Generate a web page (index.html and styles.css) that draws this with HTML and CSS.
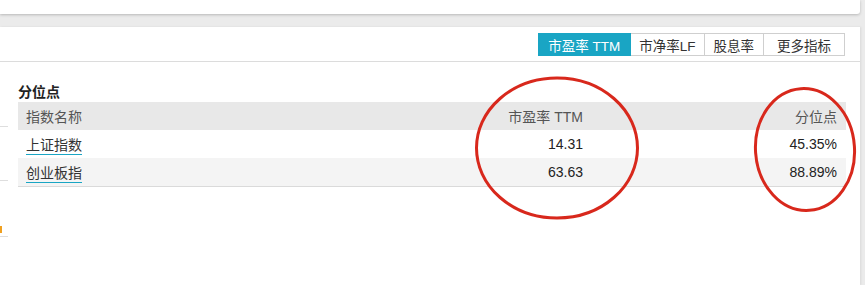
FILE: index.html
```html
<!DOCTYPE html>
<html lang="zh">
<head>
<meta charset="utf-8">
<title>分位点</title>
<link rel="stylesheet" href="styles.css">
</head>
<body>
<div class="top-card"></div>
<div class="panel">
  <div class="toolbar">
    <div class="tabs">
      <span class="tab active">市盈率 TTM</span>
      <span class="tab pb">市净率LF</span>
      <span class="tab">股息率</span>
      <span class="tab wide">更多指标</span>
    </div>
  </div>
  <div class="body">
    <div class="side">
      <div class="side-line l1"></div>
      <div class="side-line l2"></div>
      <div class="side-mark"></div>
      <div class="side-line l3"></div>
    </div>
    <div class="content">
      <h3 class="title">分位点</h3>
      <table class="grid">
        <colgroup>
          <col class="c1"><col class="c2"><col class="c3">
        </colgroup>
        <thead>
          <tr><th class="left">指数名称</th><th>市盈率 TTM</th><th>分位点</th></tr>
        </thead>
        <tbody>
          <tr><td class="left"><a class="idx">上证指数</a></td><td>14.31</td><td>45.35%</td></tr>
          <tr class="alt"><td class="left"><a class="idx">创业板指</a></td><td>63.63</td><td>88.89%</td></tr>
        </tbody>
      </table>
    </div>
  </div>
  <svg class="marks" width="865" height="258" viewBox="0 27 865 258" xmlns="http://www.w3.org/2000/svg">
    <ellipse cx="557" cy="148" rx="80.5" ry="70" fill="none" stroke="#d8281c" stroke-width="3"/>
    <ellipse cx="805" cy="149.5" rx="49.5" ry="61" transform="rotate(-4 805 149.5)" fill="none" stroke="#d8281c" stroke-width="3"/>
  </svg>
</div>
</body>
</html>
```
FILE: styles.css
```css
html, body {
  margin: 0;
  padding: 0;
}
body {
  width: 865px;
  height: 285px;
  overflow: hidden;
  background: #ebebeb;
  font-family: "Liberation Sans", "Noto Sans CJK SC", sans-serif;
  color: #333;
}
.top-card {
  width: 860px;
  height: 14px;
  background: #fff;
  border-radius: 0 0 3px 0;
  box-shadow: 0 1px 3px rgba(0, 0, 0, 0.22);
}
.panel {
  position: relative;
  margin-top: 13px;
  width: 860px;
  height: 258px;
  background: #fff;
  box-shadow: 1px 0 2px rgba(0, 0, 0, 0.08);
}
.toolbar {
  display: flex;
  justify-content: flex-end;
  padding: 6px 15px 0 0;
  box-sizing: border-box;
  height: 35px;
  border-bottom: 1px solid #dcdcdc;
}
.tabs {
  display: flex;
  height: 23px;
}
.tab {
  display: flex;
  align-items: center;
  justify-content: center;
  height: 23px;
  box-sizing: border-box;
  border: 1px solid #cfcfcf;
  border-left: none;
  padding: 0 9px;
  font-size: 13.5px;
  color: #333;
  background: #fff;
}
.tab.active {
  background: #19a5c4;
  border-color: #19a5c4;
  color: #fff;
  padding: 0 10px;
}
.tab.pb {
  padding: 0 8px;
}
.tab.wide {
  padding: 0 13px;
}
.body {
  display: flex;
}
.side {
  position: relative;
  width: 8px;
}
.side-line {
  position: absolute;
  left: 0;
  width: 8px;
  height: 1px;
  background: #dedede;
}
.l1 { top: 64px; }
.l2 { top: 118px; }
.l3 { top: 174px; }
.side-mark {
  position: absolute;
  left: 0;
  top: 164px;
  width: 2px;
  height: 7px;
  background: #f0a020;
}
.content {
  margin-left: 10px;
  width: 828px;
}
.title {
  margin: 0;
  padding-top: 20px;
  font-size: 14px;
  line-height: 20px;
  font-weight: bold;
  color: #222;
}
.grid {
  width: 828px;
  border-collapse: collapse;
  table-layout: fixed;
  font-size: 14px;
}
.c1 { width: 400px; }
.c2 { width: 174px; }
.c3 { width: 254px; }
.grid th, .grid td {
  height: 28px;
  padding: 0 9px 0 8px;
  text-align: right;
  box-sizing: border-box;
}
.grid th {
  background: #e8e8e8;
  font-weight: normal;
  color: #555;
}
.grid td {
  color: #222;
}
.grid .left {
  text-align: left;
}
.grid tr.alt td {
  background: #f4f4f4;
}
.grid tbody tr:last-child td {
  border-bottom: 1px solid #dadada;
}
.idx {
  color: #333;
  text-decoration: none;
  border-bottom: 1px solid #19a5c4;
  padding-bottom: 1px;
}
.marks {
  position: absolute;
  left: 0;
  top: 0;
  pointer-events: none;
}
```
